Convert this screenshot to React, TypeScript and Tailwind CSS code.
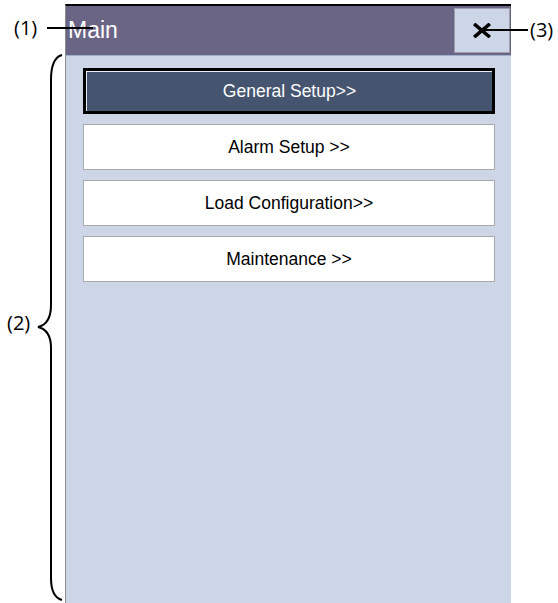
import React from 'react';

const MENU = ['General Setup>>', 'Alarm Setup >>', 'Load Configuration>>', 'Maintenance >>'];

export default function App() {
  return (
    <div className="relative w-[558px] h-[603px] bg-white overflow-hidden pt-[4px] flex font-['Open_Sans',sans-serif]">
      {/* left gutter with brace (2) */}
      <div className="relative w-[65px] shrink-0">
        <svg width="65" height="603" className="absolute left-0 top-[-4px]">
          <path
            d="M 62 55 Q 51 58 51 80 L 51 305 Q 51 324 38 327 Q 51 330 51 348 L 51 578 Q 51 597 62 600"
            fill="none"
            stroke="#000"
            strokeWidth="2"
          />
        </svg>
        <span className="absolute left-[7px] top-[306px] text-[20px] leading-[26px] text-black">(2)</span>
      </div>

      {/* main panel */}
      <div className="w-[446px] shrink-0 flex flex-col border-t-2 border-black border-l border-l-[#8c8c8c] bg-[#cdd6e6]">
        <div className="h-[50px] bg-[#6b6585] border-b border-[#9fb0cf] flex items-center justify-between pl-[2px] pr-[1px]">
          <span className="text-white text-[23px] font-['Liberation_Sans',sans-serif] leading-none">Main</span>
          <button className="w-[56px] h-[45px] bg-[#cdd6e6] border border-[#9c9cae] flex items-center justify-center">
            <svg width="18" height="15" viewBox="0 0 18 15">
              <path d="M2.5 2 L15.5 13 M15.5 2 L2.5 13" stroke="#000" strokeWidth="3.6" strokeLinecap="square" />
            </svg>
          </button>
        </div>
        <div className="flex flex-col gap-[10px] pt-[12px] pl-[17px] pr-[16px] font-['Liberation_Sans',sans-serif]">
          {MENU.map((m, i) =>
            i === 0 ? (
              <div key={m} className="h-[46px] border-[3px] border-black bg-[#46556f] flex items-center justify-center">
                <div className="w-full h-full border-t border-l border-[#e8ecf4] flex items-center justify-center text-white text-[17.5px]">
                  {m}
                </div>
              </div>
            ) : (
              <div key={m} className="h-[46px] bg-white border border-[#a9a9a9] flex items-center justify-center text-black text-[17.5px]">
                {m}
              </div>
            )
          )}
        </div>
      </div>

      {/* annotation (1) */}
      <span className="absolute left-[14px] top-[15px] text-[20px] leading-[26px] text-black">(1)</span>
      <div className="absolute left-[47px] top-[27px] w-[46px] h-[2px] bg-black" />

      {/* annotation (3) */}
      <div className="absolute left-[484px] top-[29px] w-[44px] h-[2px] bg-black" />
      <span className="absolute left-[530px] top-[17px] text-[20px] leading-[26px] text-black">(3)</span>
    </div>
  );
}
